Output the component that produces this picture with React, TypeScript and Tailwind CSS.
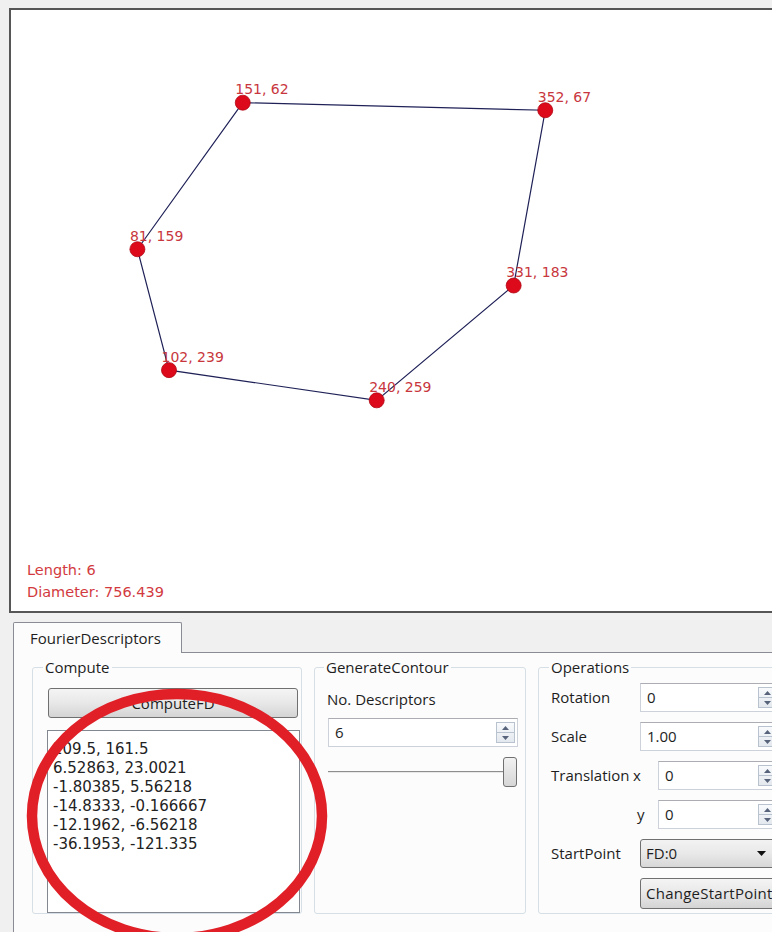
import React from "react";

type Pt = [number, number];

// contour vertices in scene units
const vertices: Pt[] = [
  [151, 62],
  [352, 67],
  [331, 183],
  [240, 259],
  [102, 239],
  [81, 159],
];

// scene -> view mapping
const toView = ([x, y]: Pt): Pt => [1.505 * x + 4.5, 1.511 * y - 1];

const descriptors = [
  "209.5, 161.5",
  "6.52863, 23.0021",
  "-1.80385, 5.56218",
  "-14.8333, -0.166667",
  "-12.1962, -6.56218",
  "-36.1953, -121.335",
];

function SpinArrows() {
  return (
    <div className="flex h-[21px] w-[19px] shrink-0 flex-col border border-[#b9c3cf] bg-linear-to-b from-[#f8fafc] to-[#e4e9ef]">
      <div className="flex flex-1 items-center justify-center border-b border-[#b9c3cf]">
        <svg width="7" height="4" viewBox="0 0 7 4">
          <path d="M0 4 L3.5 0 L7 4Z" fill="#56637a" />
        </svg>
      </div>
      <div className="flex flex-1 items-center justify-center">
        <svg width="7" height="4" viewBox="0 0 7 4">
          <path d="M0 0 L3.5 4 L7 0Z" fill="#56637a" />
        </svg>
      </div>
    </div>
  );
}

function SpinBox({ value, width }: { value: string; width: string }) {
  return (
    <div
      className={`flex h-[29px] shrink-0 items-center justify-between border border-[#cdd2da] border-t-[#abadb3] bg-white pl-[6px] pr-[2px] ${width}`}
    >
      <span>{value}</span>
      <SpinArrows />
    </div>
  );
}

function Canvas() {
  const pts = vertices.map(toView);
  const path = pts.map((p, i) => `${i === 0 ? "M" : "L"}${p[0]} ${p[1]}`).join(" ") + " Z";
  return (
    <div className="relative ml-[9px] flex h-[605px] w-[790px] flex-col justify-end border-2 border-[#565656] bg-white pb-[8px] pl-[16px] font-['DejaVu_Sans',sans-serif] text-[14.5px] leading-[22px] text-[#d23a40]">
      <svg className="absolute inset-0" width="786" height="601" viewBox="0 0 786 601">
        <path d={path} fill="none" stroke="#1f2157" strokeWidth="1.2" />
        {pts.map((p, i) => (
          <circle key={i} cx={p[0]} cy={p[1]} r="7.5" fill="#dc0a1b" stroke="#b00814" strokeWidth="0.8" />
        ))}
        {pts.map((p, i) => (
          <text
            key={`t${i}`}
            x={p[0] - 7.5}
            y={p[1] - 8.5}
            fill="#c8373d"
            fontSize="14"
            fontFamily="'DejaVu Sans', sans-serif"
          >
            {`${vertices[i][0]}, ${vertices[i][1]}`}
          </text>
        ))}
      </svg>
      <div className="relative">Length: 6</div>
      <div className="relative">Diameter: 756.439</div>
    </div>
  );
}

function ComputeGroup() {
  return (
    <fieldset className="h-[256px] w-[270px] min-w-0 shrink-0 rounded-[3px] border border-[#d5dfe5] px-0 pb-0 pt-[12px]">
      <legend className="ml-[10px] px-[2px] leading-[18px]">Compute</legend>
      <button className="ml-[15px] flex h-[30px] w-[250px] items-center justify-center rounded-[3px] border border-[#707070] bg-linear-to-b from-[#f4f4f4] via-[#e8e8e8] to-[#d4d4d4]">
        ComputeFD
      </button>
      <div className="ml-[14px] mt-[12px] h-[183px] w-[253px] border border-[#828790] bg-white pl-[5px] pt-[9px] font-['DejaVu_Sans',sans-serif] text-[15px] leading-[19px] text-[#222]">
        {descriptors.map((d) => (
          <div key={d}>{d}</div>
        ))}
      </div>
    </fieldset>
  );
}

function GenerateGroup() {
  return (
    <fieldset className="h-[256px] w-[212px] min-w-0 shrink-0 rounded-[3px] border border-[#d5dfe5] px-0 pb-0 pt-[14px]">
      <legend className="ml-[9px] px-[2px] leading-[18px]">GenerateContour</legend>
      <div className="ml-[12px] leading-[18px]">No. Descriptors</div>
      <div className="ml-[13px] mt-[10px]">
        <SpinBox value="6" width="w-[190px]" />
      </div>
      <div className="ml-[13px] mt-[10px] flex h-[30px] w-[190px] items-center">
        <div className="h-[2px] flex-1 border-t border-[#8e8e8e] bg-[#e8e8e8]" />
        <div className="h-[30px] w-[14px] rounded-[3px] border border-[#707070] bg-linear-to-b from-[#f2f2f2] to-[#d6d6d6]" />
        <div className="w-[1px]" />
      </div>
    </fieldset>
  );
}

function OperationsGroup() {
  return (
    <fieldset className="h-[256px] w-[260px] min-w-0 shrink-0 rounded-[3px] border border-[#d5dfe5] px-0 pb-0 pt-[7px]">
      <legend className="ml-[10px] px-[2px] leading-[18px]">Operations</legend>
      <div className="flex flex-col gap-[10px] pl-[12px]">
        <div className="flex h-[29px] items-center">
          <span className="w-[89px] shrink-0">Rotation</span>
          <SpinBox value="0" width="w-[140px]" />
        </div>
        <div className="flex h-[29px] items-center">
          <span className="w-[89px] shrink-0">Scale</span>
          <SpinBox value="1.00" width="w-[140px]" />
        </div>
        <div className="flex h-[29px] items-center">
          <span className="w-[82px] shrink-0">Translation</span>
          <span className="w-[25px] shrink-0">x</span>
          <SpinBox value="0" width="w-[122px]" />
        </div>
        <div className="flex h-[29px] items-center">
          <span className="w-[86px] shrink-0" />
          <span className="w-[21px] shrink-0">y</span>
          <SpinBox value="0" width="w-[122px]" />
        </div>
        <div className="flex h-[29px] items-center">
          <span className="w-[89px] shrink-0">StartPoint</span>
          <div className="flex h-[29px] w-[140px] shrink-0 items-center justify-between rounded-[3px] border border-[#707070] bg-linear-to-b from-[#f2f2f2] via-[#e9e9e9] to-[#d7d7d7] pl-[5px] pr-[13px]">
            <span>FD:0</span>
            <svg width="9" height="5" viewBox="0 0 9 5">
              <path d="M0 0 L9 0 L4.5 5Z" fill="#111" />
            </svg>
          </div>
        </div>
        <div className="flex h-[31px] items-center pl-[89px]">
          <button className="flex h-[31px] w-[150px] shrink-0 items-center rounded-[3px] border border-[#707070] bg-linear-to-b from-[#f4f4f4] via-[#e8e8e8] to-[#d4d4d4] pl-[5px] tracking-[0.25px]">
            ChangeStartPoint
          </button>
        </div>
      </div>
    </fieldset>
  );
}

export default function App() {
  return (
    <div className="relative h-[932px] w-[772px] overflow-hidden bg-[#f0f0f0] pt-[8px] font-['Open_Sans',sans-serif] text-[15px] text-[#1e1e1e]">
      <Canvas />

      <div className="ml-[13px] mt-[9px] flex h-[31px] w-[800px]">
        <div className="flex w-[169px] items-center rounded-t-[2px] border border-b-0 border-[#898c95] bg-[#fcfcfc] pl-[16px]">
          FourierDescriptors
        </div>
        <div className="flex-1 border-b border-[#898c95]" />
      </div>

      <div className="ml-[13px] flex h-[300px] w-[800px] items-start gap-[12px] border-l border-[#898c95] bg-[#fcfcfc] pl-[18px] pt-[5px]">
        <ComputeGroup />
        <GenerateGroup />
        <OperationsGroup />
      </div>

      <svg className="pointer-events-none absolute inset-0" width="772" height="932" viewBox="0 0 772 932">
        <ellipse cx="177" cy="816" rx="145" ry="122" fill="none" stroke="#e01f27" strokeWidth="10.5" />
      </svg>
    </div>
  );
}
